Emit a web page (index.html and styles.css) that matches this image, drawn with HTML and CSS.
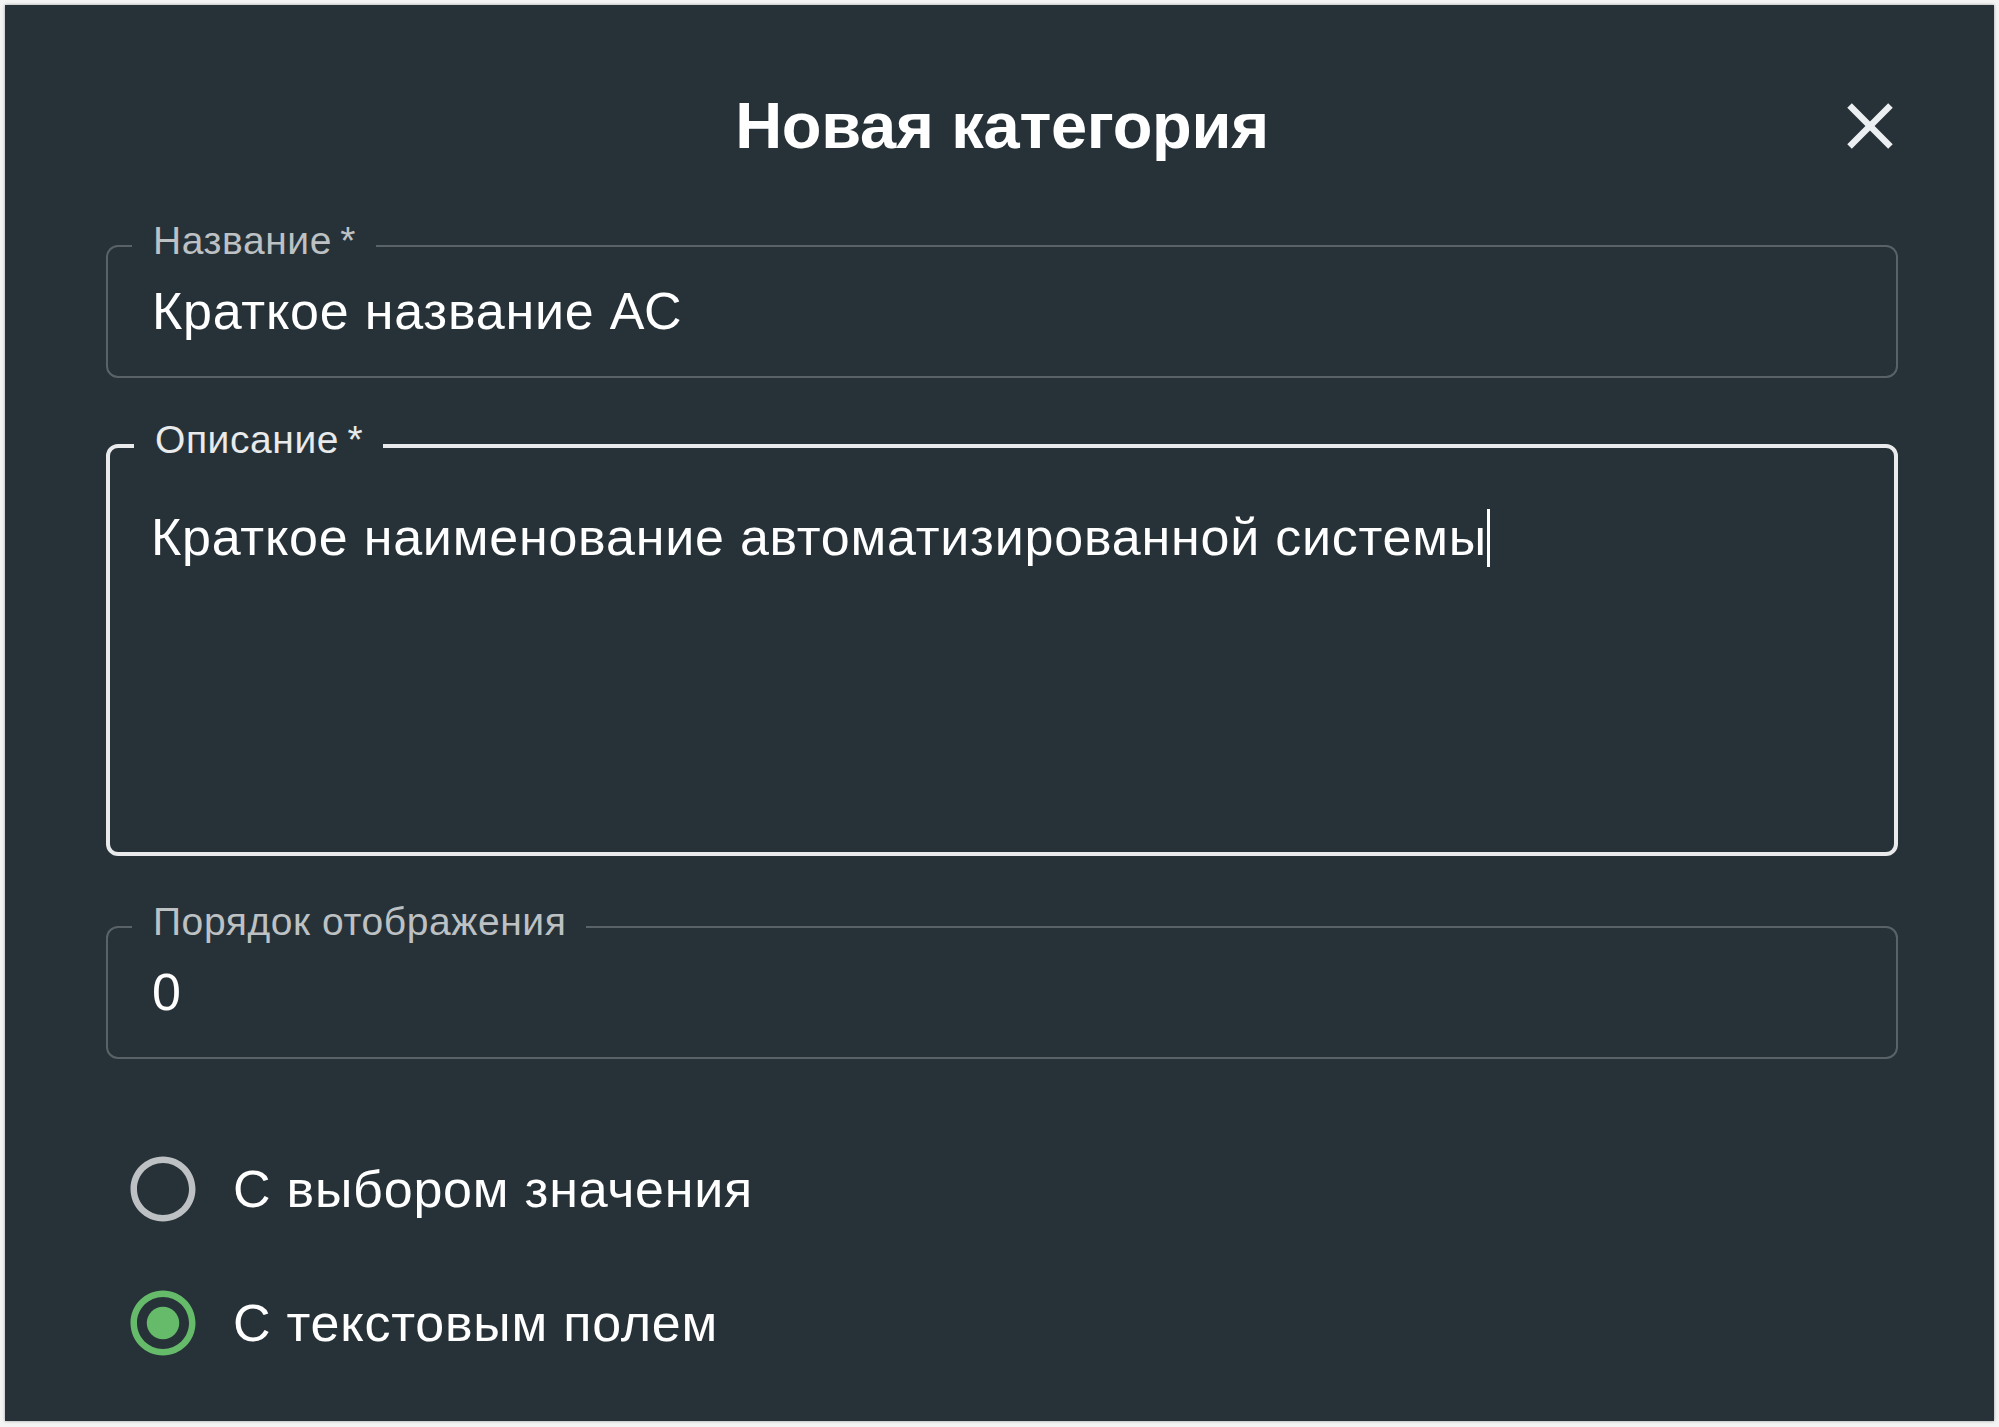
FILE: index.html
```html
<!DOCTYPE html>
<html lang="ru">
<head>
<meta charset="utf-8">
<title>Новая категория</title>
<link rel="stylesheet" href="styles.css">
</head>
<body>
<div class="dialog">
  <div class="dialog-header">
    <span class="header-spacer"></span>
    <h2 class="dialog-title">Новая категория</h2>
    <button class="close-btn" type="button" aria-label="Закрыть">
      <svg viewBox="0 0 24 24" width="78" height="78" aria-hidden="true">
        <path d="M19 6.41 17.59 5 12 10.59 6.41 5 5 6.41 10.59 12 5 17.59 6.41 19 12 13.41 17.59 19 19 17.59 13.41 12z"/>
      </svg>
    </button>
  </div>

  <div class="field field-name">
    <span class="field-label">Название&thinsp;*</span>
    <div class="field-input">Краткое название АС</div>
  </div>

  <div class="field field-focused field-desc">
    <span class="field-label">Описание&thinsp;*</span>
    <div class="field-input field-multiline">Краткое наименование автоматизированной системы<span class="caret"></span></div>
  </div>

  <div class="field field-order">
    <span class="field-label">Порядок отображения</span>
    <div class="field-input">0</div>
  </div>

  <div class="radio-group">
    <label class="radio-row">
      <span class="radio-icon">
        <svg viewBox="0 0 24 24" width="78" height="78" aria-hidden="true">
          <path class="ring-off" d="M12 2C6.48 2 2 6.48 2 12s4.480 10 10 10 10-4.48 10-10S17.52 2 12 2zm0 18c-4.42 0-8-3.58-8-8s3.58-8 8-8 8 3.58 8 8-3.58 8-8 8z"/>
        </svg>
      </span>
      <span class="radio-text">С выбором значения</span>
    </label>
    <label class="radio-row">
      <span class="radio-icon">
        <svg viewBox="0 0 24 24" width="78" height="78" aria-hidden="true">
          <path class="ring-on" d="M12 2C6.48 2 2 6.48 2 12s4.48 10 10 10 10-4.48 10-10S17.52 2 12 2zm0 18c-4.42 0-8-3.58-8-8s3.58-8 8-8 8 3.58 8 8-3.58 8-8 8z"/>
          <path class="ring-on" d="M12 7c-2.76 0-5 2.24-5 5s2.24 5 5 5 5-2.24 5-5-2.24-5-5-5z"/>
        </svg>
      </span>
      <span class="radio-text">С текстовым полем</span>
    </label>
  </div>
</div>
</body>
</html>
```

FILE: styles.css
```css
* {
  box-sizing: border-box;
}

html, body {
  margin: 0;
  padding: 0;
}

body {
  background: #f4f4f4;
  font-family: "Liberation Sans", Arial, sans-serif;
  width: 1999px;
  height: 1427px;
  overflow: hidden;
}

.dialog {
  width: 1989px;
  height: 1416px;
  margin: 5px 0 0 5px;
  background: #263238;
  box-shadow: 0 0 3px rgba(0, 0, 0, 0.35);
  padding: 69px 96px 0 101px;
  display: flex;
  flex-direction: column;
}

.dialog-header {
  display: grid;
  grid-template-columns: 1fr auto 1fr;
  align-items: center;
  height: 104px;
}

.dialog-title {
  margin: 0;
  font-size: 65px;
  line-height: 104px;
  font-weight: 700;
  letter-spacing: -0.3px;
  color: #ffffff;
  white-space: nowrap;
}

.close-btn {
  justify-self: end;
  margin-right: -11px;
  width: 78px;
  height: 78px;
  padding: 0;
  border: 0;
  background: transparent;
  display: flex;
  align-items: center;
  justify-content: center;
  cursor: pointer;
}

.close-btn svg {
  fill: #eceff1;
  display: block;
}

.field {
  position: relative;
  border: 2px solid rgba(255, 255, 255, 0.24);
  border-radius: 12px;
}

.field-name {
  margin-top: 67px;
}

.field-desc {
  margin-top: 66px;
}

.field-order {
  margin-top: 70px;
}

.field-focused {
  border: 4px solid #e8eaeb;
}

.field-label {
  position: absolute;
  top: -28px;
  left: 24px;
  padding: 0 20px 0 21px;
  background: #263238;
  font-size: 39px;
  line-height: 44px;
  letter-spacing: 0.015em;
  color: #bdc1c3;
  white-space: nowrap;
}

.field-focused .field-label {
  top: -30px;
  color: #e8eaeb;
}

.field-input {
  padding: 27px 44px;
  font-size: 52px;
  line-height: 75px;
  letter-spacing: 0.015em;
  color: #ffffff;
  white-space: nowrap;
}

.field-multiline {
  padding: 52px 42px 52px 41px;
  height: 404px;
  white-space: normal;
}

.caret {
  display: inline-block;
  width: 0;
  height: 58px;
  border-left: 3px solid #ffffff;
  vertical-align: -12px;
  margin-left: 0;
}

.radio-group {
  margin-top: 63px;
  display: flex;
  flex-direction: column;
}

.radio-row {
  display: flex;
  align-items: center;
  margin-left: -10px;
  cursor: pointer;
}

.radio-icon {
  padding: 28px;
  display: flex;
}

.radio-icon svg {
  display: block;
}

.ring-off {
  fill: #bec1c3;
}

.ring-on {
  fill: #66bb6a;
}

.radio-text {
  margin-left: 3px;
  font-size: 52px;
  line-height: 78px;
  letter-spacing: 0.015em;
  color: #ffffff;
  white-space: nowrap;
}
```
